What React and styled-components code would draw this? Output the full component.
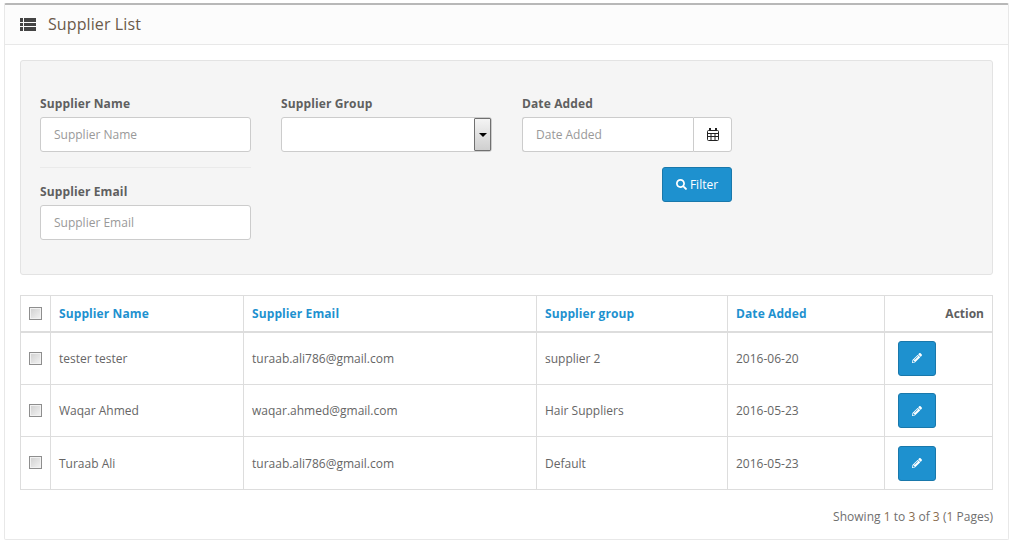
import React from 'react';
import styled, { createGlobalStyle } from 'styled-components';
import { FaSearch, FaPencilAlt } from 'react-icons/fa';

const Global = createGlobalStyle`
  html, body { margin: 0; padding: 0; background: #fff; }
  body {
    font-family: 'Open Sans', sans-serif;
    font-size: 12px;
    color: #666;
  }
  * { box-sizing: border-box; }
`;

const Page = styled.div`
  width: 1011px;
  height: 542px;
  padding: 3px 2px 0 4px;
  overflow: hidden;
`;

const Panel = styled.div`
  width: 1005px;
  height: 537px;
  border: 1px solid #e8e8e8;
  border-top: 2px solid #b8b8b8;
  border-radius: 2px;
`;

const Heading = styled.div`
  height: 40px;
  display: flex;
  align-items: center;
  padding-left: 15px;
  gap: 12px;
  background: #fcfcfc;
  border-bottom: 1px solid #e8e8e8;
`;

const Title = styled.h3`
  margin: -2px 0 0;
  font-size: 16px;
  font-weight: 400;
  letter-spacing: 0.1px;
  color: #6b5a4a;
`;

const Body = styled.div`
  padding: 15px 15px 0;
`;

const Well = styled.div`
  height: 215px;
  padding: 34px 19px 0;
  background: #f5f5f5;
  border: 1px solid #e3e3e3;
  border-radius: 3px;
  margin-bottom: 20px;
  display: grid;
  grid-template-columns: 211px 211px 210px;
  column-gap: 30px;
  align-items: start;
`;

const Column = styled.div`
  display: flex;
  flex-direction: column;
`;

const Label = styled.label`
  font-size: 12px;
  font-weight: 700;
  line-height: 17px;
  margin-bottom: 5px;
  letter-spacing: 0.12px;
  color: #5f5f5f;
`;

const Input = styled.input`
  width: 100%;
  height: 35px;
  padding: 0 13px;
  font-family: inherit;
  font-size: 12px;
  background: #fff;
  border: 1px solid #ccc;
  border-radius: 3px;
  outline: none;
  &::placeholder { color: #999; opacity: 1; }
`;

const Divider = styled.div`
  height: 1px;
  background: #eaeaea;
  margin: 15px 0;
`;

const SelectBox = styled.div`
  height: 35px;
  display: flex;
  justify-content: flex-end;
  background: #fff;
  border: 1px solid #ccc;
  border-radius: 3px;
`;

const SelectArrow = styled.span`
  width: 17px;
  display: flex;
  align-items: center;
  justify-content: center;
  background: linear-gradient(#f4f4f4, #cfcfcf);
  border: 1px solid #707070;
  border-radius: 1px;
  &::before {
    content: '';
    border-left: 4px solid transparent;
    border-right: 4px solid transparent;
    border-top: 4px solid #000;
  }
`;

const InputGroup = styled.div`
  display: flex;
  height: 35px;
`;

const GroupInput = styled(Input)`
  flex: 1;
  min-width: 0;
  border-radius: 3px 0 0 3px;
  border-right: 0;
`;

const Addon = styled.span`
  width: 39px;
  display: flex;
  align-items: center;
  justify-content: center;
  background: #fff;
  border: 1px solid #ccc;
  border-radius: 0 3px 3px 0;
`;

const BlueButton = styled.button`
  display: inline-flex;
  align-items: center;
  justify-content: center;
  gap: 3px;
  color: #fff;
  font-family: inherit;
  font-size: 12px;
  background: #1e91cf;
  border: 1px solid #1978ab;
  border-radius: 3px;
  padding: 0;
`;

const FilterButton = styled(BlueButton)`
  width: 70px;
  height: 35px;
  margin-top: 15px;
  align-self: flex-end;
`;

const EditButton = styled(BlueButton)`
  width: 38px;
  height: 35px;
  font-size: 10px;
`;

const Table = styled.table`
  width: 972px;
  border-collapse: collapse;
  table-layout: fixed;
  background: #fff;
`;

const Th = styled.th`
  height: 36px;
  padding: 0 8px;
  font-size: 12px;
  font-weight: 700;
  letter-spacing: ${p => (p.$link ? '0.1px' : '0')};
  color: ${p => (p.$link ? '#1e91cf' : '#5f5f5f')};
  text-align: ${p => p.$align || 'left'};
  border: 1px solid #ddd;
  border-bottom: 2px solid #ddd;
`;

const Td = styled.td`
  height: ${p => p.$h || 52}px;
  padding: 0 8px;
  font-size: 12px;
  color: #666;
  border: 1px solid #ddd;
`;

const CheckCell = styled(Td)`
  text-align: center;
  padding: 0;
`;

const ActionCell = styled(Td)`
  padding-left: 13px;
`;

const CheckHead = styled(Th)`
  text-align: center;
  padding: 0;
`;

const Check = styled.span`
  display: inline-block;
  width: 13px;
  height: 13px;
  vertical-align: middle;
  margin-top: -3px;
  border: 1px solid #8e8e8e;
  background: linear-gradient(135deg, #cfcfcf, #f4f4f4);
  box-shadow: inset 0 0 0 1px #f2f2f2;
`;

const Results = styled.div`
  margin-top: 18px;
  text-align: right;
  font-size: 12px;
  line-height: 17px;
  letter-spacing: 0.02px;
  color: #6f6f6f;
`;

const Brown = styled.span`
  color: #8a6d4f;
`;

const ListIcon = () => (
  <svg width="16" height="13" viewBox="0 0 16 13" fill="#444">
    <rect x="0" y="0" width="3" height="4" />
    <rect x="4" y="0" width="12" height="4" />
    <rect x="0" y="5" width="3" height="3" />
    <rect x="4" y="5" width="12" height="3" />
    <rect x="0" y="9" width="3" height="4" />
    <rect x="4" y="9" width="12" height="4" />
  </svg>
);

const CalendarIcon = () => (
  <svg width="12" height="13" viewBox="0 0 12 13" fill="none" stroke="#222" strokeWidth="1">
    <rect x="0.5" y="2.5" width="11" height="10" rx="1" />
    <path d="M0.5 5.5h11M0.5 8.5h11M4 5.5v7M8 5.5v7" />
    <path d="M3 0v3M9 0v3" strokeWidth="2" />
  </svg>
);

const rows = [
  ['tester tester', 'turaab.ali786@gmail.com', 'supplier 2', '2016-06-20', 53],
  ['Waqar Ahmed', 'waqar.ahmed@gmail.com', 'Hair Suppliers', '2016-05-23', 52],
  ['Turaab Ali', 'turaab.ali786@gmail.com', 'Default', '2016-05-23', 53],
];

export default function App() {
  return (
    <Page>
      <Global />
      <Panel>
        <Heading>
          <ListIcon />
          <Title>Supplier List</Title>
        </Heading>
        <Body>
          <Well>
            <Column>
              <Label>Supplier Name</Label>
              <Input placeholder="Supplier Name" />
              <Divider />
              <Label>Supplier Email</Label>
              <Input placeholder="Supplier Email" />
            </Column>
            <Column>
              <Label>Supplier Group</Label>
              <SelectBox>
                <SelectArrow />
              </SelectBox>
            </Column>
            <Column>
              <Label>Date Added</Label>
              <InputGroup>
                <GroupInput placeholder="Date Added" />
                <Addon><CalendarIcon /></Addon>
              </InputGroup>
              <FilterButton><FaSearch size={11} /> Filter</FilterButton>
            </Column>
          </Well>
          <Table>
            <colgroup>
              <col width="30" />
              <col width="193" />
              <col width="293" />
              <col width="191" />
              <col width="157" />
              <col width="108" />
            </colgroup>
            <thead>
              <tr>
                <CheckHead><Check /></CheckHead>
                <Th $link>Supplier Name</Th>
                <Th $link>Supplier Email</Th>
                <Th $link>Supplier group</Th>
                <Th $link>Date Added</Th>
                <Th $align="right">Action</Th>
              </tr>
            </thead>
            <tbody>
              {rows.map(r => (
                <tr key={r[0]}>
                  <CheckCell $h={r[4]}><Check /></CheckCell>
                  <Td $h={r[4]}>{r[0]}</Td>
                  <Td $h={r[4]}>{r[1]}</Td>
                  <Td $h={r[4]}>{r[2]}</Td>
                  <Td $h={r[4]}>{r[3]}</Td>
                  <ActionCell $h={r[4]}><EditButton><FaPencilAlt /></EditButton></ActionCell>
                </tr>
              ))}
            </tbody>
          </Table>
          <Results>
            Showing <Brown>1</Brown> to <Brown>3</Brown> of <Brown>3</Brown> (<Brown>1</Brown> Pages)
          </Results>
        </Body>
      </Panel>
    </Page>
  );
}
